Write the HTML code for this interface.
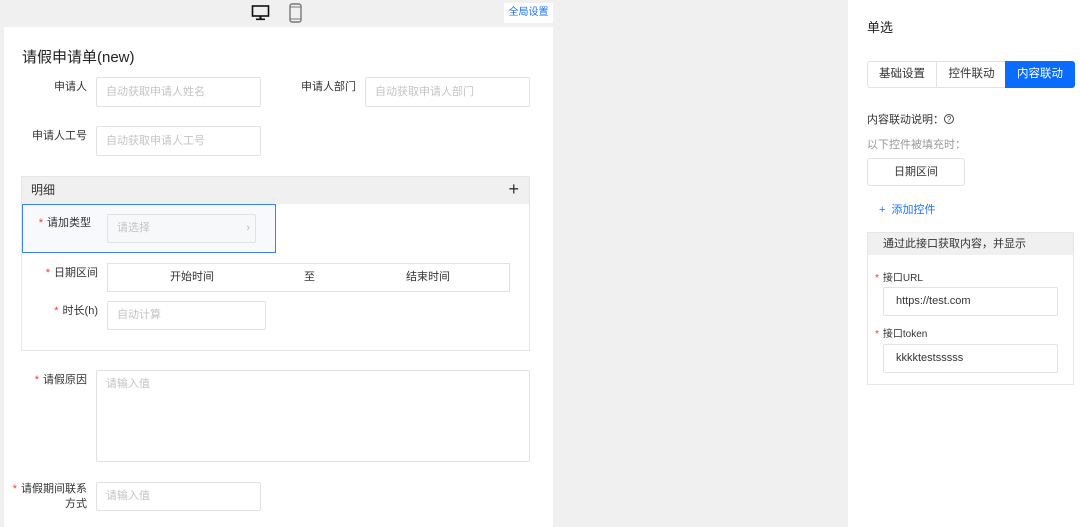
<!DOCTYPE html>
<html><head><meta charset="utf-8"><style>
*{margin:0;padding:0;box-sizing:border-box}
body{width:1080px;height:527px;overflow:hidden;background:#f0f0f0;font-family:"Liberation Sans","Noto Sans CJK SC",sans-serif;font-size:12px;color:#333;position:relative}
.a{position:absolute}
.inp{position:absolute;border:1px solid #e2e2e2;background:#fff;border-radius:2px;color:#c4c4c4;font-size:11px;padding-left:9px}
.lbl{position:absolute;text-align:right;font-size:11px;color:#333}
.st{color:#f33;margin-right:4px}
</style></head><body>
<div class="a" style="left:0;top:0;width:848px;height:26px;background:#f0f0f0"></div>
<svg class="a" style="left:251px;top:5px" width="20" height="16" viewBox="0 0 20 16"><rect x="1.5" y="1" width="16" height="10" fill="none" stroke="#111" stroke-width="1.6"/><rect x="8.5" y="11" width="2" height="3" fill="#111"/><rect x="5" y="13.5" width="9" height="1.6" fill="#111"/></svg>
<svg class="a" style="left:289px;top:3px" width="13" height="20" viewBox="0 0 13 20"><rect x="1" y="1" width="11" height="18" rx="2" fill="none" stroke="#777" stroke-width="1.4"/><line x1="1" y1="4" x2="12" y2="4" stroke="#777"/><line x1="1" y1="16" x2="12" y2="16" stroke="#777"/></svg>
<div class="a" style="left:504px;top:3px;width:49px;height:20px;background:#fff;color:#1a73ff;font-size:10px;line-height:20px;text-align:center">全局设置</div>
<div class="a" style="left:4px;top:27px;width:549px;height:500px;background:#fff"></div>
<div class="a" style="left:22px;top:46px;font-size:15px;color:#222">请假申请单(new)</div>

<div class="lbl" style="left:20px;top:78px;width:67px">申请人</div>
<div class="inp" style="left:96px;top:77px;width:165px;height:30px;line-height:28px">自动获取申请人姓名</div>
<div class="lbl" style="left:280px;top:78px;width:76px">申请人部门</div>
<div class="inp" style="left:365px;top:77px;width:165px;height:30px;line-height:28px">自动获取申请人部门</div>
<div class="lbl" style="left:20px;top:127px;width:67px">申请人工号</div>
<div class="inp" style="left:96px;top:126px;width:165px;height:30px;line-height:28px">自动获取申请人工号</div>

<div class="a" style="left:21px;top:176px;width:509px;height:175px;border:1px solid #e6e6e6;background:#fff"></div>
<div class="a" style="left:22px;top:177px;width:507px;height:27px;background:#f0f0f0;line-height:27px;padding-left:9px;font-size:12px">明细<span style="position:absolute;right:10px;font-size:18px;top:-1px">+</span></div>
<div class="a" style="left:22px;top:204px;width:254px;height:49px;border:1px solid #3b82f6;background:#f8f9fc"></div>
<div class="lbl" style="left:20px;top:214px;width:71px"><span class="st">*</span>请加类型</div>
<div class="inp" style="left:107px;top:214px;width:149px;height:29px;line-height:27px;background:#f7f8fa">请选择<span style="position:absolute;right:5px;color:#bbb">›</span></div>
<div class="lbl" style="left:20px;top:264px;width:78px"><span class="st">*</span>日期区间</div>
<div class="a" style="left:107px;top:263px;width:403px;height:29px;border:1px solid #e2e2e2;font-size:11px;line-height:27px">
<span class="a" style="left:62px">开始时间</span><span class="a" style="left:196px">至</span><span class="a" style="left:298px">结束时间</span></div>
<div class="lbl" style="left:20px;top:302px;width:78px"><span class="st">*</span>时长(h)</div>
<div class="inp" style="left:107px;top:301px;width:159px;height:29px;line-height:27px">自动计算</div>

<div class="lbl" style="left:20px;top:371px;width:67px"><span class="st">*</span>请假原因</div>
<div class="inp" style="left:96px;top:370px;width:434px;height:92px;line-height:26px">请输入值</div>
<div class="lbl" style="left:4px;top:482px;width:83px;line-height:15px"><span class="st">*</span>请假期间联系<br>方式</div>
<div class="inp" style="left:96px;top:482px;width:165px;height:29px;line-height:27px">请输入值</div>

<div class="a" style="left:848px;top:0;width:232px;height:527px;background:#fff"></div>
<div class="a" style="left:867px;top:17px;font-size:13px;color:#222">单选</div>
<div class="a" style="left:867px;top:61px;width:207px;height:27px;border:1px solid #e2e2e2;border-radius:3px;font-size:11.5px;line-height:25px">
<span class="a" style="left:0;width:69px;text-align:center;border-right:1px solid #e2e2e2">基础设置</span>
<span class="a" style="left:69px;width:69px;text-align:center">控件联动</span>
<span class="a" style="left:137px;top:-1px;width:70px;height:27px;line-height:27px;text-align:center;background:#0a6cff;color:#fff;border-radius:0 3px 3px 0">内容联动</span></div>
<div class="a" style="left:867px;top:111px;font-size:11px">内容联动说明：<span style="display:inline-block;width:10px;height:10px;border:1px solid #444;border-radius:50%;font-size:8px;line-height:9px;text-align:center;vertical-align:1px">?</span></div>
<div class="a" style="left:867px;top:136px;font-size:11px;color:#999">以下控件被填充时：</div>
<div class="a" style="left:867px;top:158px;width:98px;height:28px;border:1px solid #e2e2e2;border-radius:3px;font-size:11px;line-height:26px;text-align:center">日期区间</div>
<div class="a" style="left:879px;top:201px;font-size:11px;color:#1a73ff">+&nbsp;&nbsp;添加控件</div>
<div class="a" style="left:867px;top:232px;width:207px;height:153px;border:1px solid #e6e6e6"></div>
<div class="a" style="left:868px;top:233px;width:205px;height:22px;background:#f0f0f0;font-size:11px;line-height:22px;padding-left:15px">通过此接口获取内容，并显示</div>
<div class="a" style="left:875px;top:269px;font-size:10px"><span class="st">*</span>接口URL</div>
<div class="a" style="left:883px;top:287px;width:175px;height:29px;border:1px solid #e2e2e2;border-radius:2px;font-size:11px;line-height:27px;padding-left:12px">https://test.com</div>
<div class="a" style="left:875px;top:325px;font-size:10px"><span class="st">*</span>接口token</div>
<div class="a" style="left:883px;top:344px;width:175px;height:29px;border:1px solid #e2e2e2;border-radius:2px;font-size:11px;line-height:27px;padding-left:12px">kkkktestsssss</div>
</body></html>
